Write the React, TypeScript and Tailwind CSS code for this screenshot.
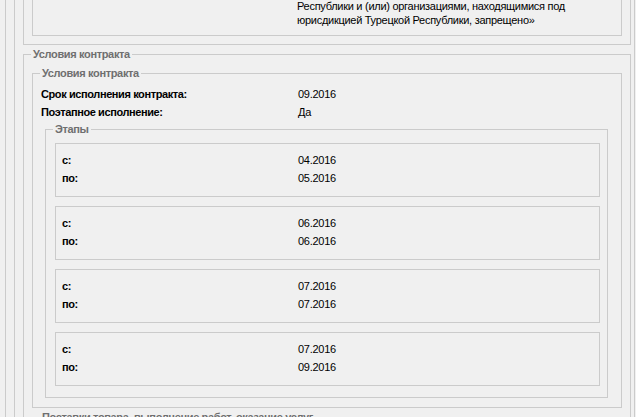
import type { ReactNode } from "react";

const stages = [
  { from: "04.2016", to: "05.2016" },
  { from: "06.2016", to: "06.2016" },
  { from: "07.2016", to: "07.2016" },
  { from: "07.2016", to: "09.2016" },
];

function Legend({ children }: { children: ReactNode }) {
  return (
    <legend className="ml-[7px] px-[2px] text-[11px] leading-[14px] font-bold tracking-[-0.35px] text-[#6f6f6f]">
      {children}
    </legend>
  );
}

function Stage({ from, to }: { from: string; to: string }) {
  return (
    <div className="ml-[9px] w-[545px] border border-[#cbcbcb] pt-[7px] pb-[9px] pl-[6px]">
      <div className="grid grid-cols-[236px_1fr] leading-[18px]">
        <span className="font-bold tracking-[-0.4px]">с:</span>
        <span>{from}</span>
        <span className="font-bold tracking-[-0.4px]">по:</span>
        <span>{to}</span>
      </div>
    </div>
  );
}

export default function App() {
  return (
    <div className="h-[417px] w-[636px] overflow-hidden bg-[#f0f0f0] font-['Liberation_Sans',Arial,sans-serif] text-[11px] tracking-[-0.28px] text-black">
      <div className="-mt-[15px] ml-[5px] w-[700px] border-l border-[#cbcbcb]">
        <div className="ml-[8px] w-[621px] border-x border-[#cbcbcb] pb-[40px]">
          {/* upper block, scrolled partly out of view */}
          <div className="ml-[8px] w-[608px] border border-[#cbcbcb] pt-[6px] pb-[8px]">
            <div className="ml-[8px] w-[590px] border border-[#cbcbcb] pt-[6px] pb-[8px] pl-[8px]">
              <div className="grid grid-cols-[256px_1fr] leading-[14px]">
                <span />
                <span>
                  Республики и (или) организациями, находящимися под
                  <br />
                  юрисдикцией Турецкой Республики, запрещено»
                </span>
              </div>
            </div>
          </div>

          <fieldset className="mt-[2px] ml-[8px] w-[608px] border border-[#cbcbcb]">
            <Legend>Условия контракта</Legend>
            <div className="pt-[5px]">
              <fieldset className="ml-[8px] w-[590px] border border-[#cbcbcb]">
                <Legend>Условия контракта</Legend>
                <div className="pt-[5px] pb-[9px]">
                  <div className="grid grid-cols-[257px_1fr] pl-[8px] leading-[18px]">
                    <span className="font-bold tracking-[-0.4px]">Срок исполнения контракта:</span>
                    <span>09.2016</span>
                    <span className="font-bold tracking-[-0.4px]">Поэтапное исполнение:</span>
                    <span>Да</span>
                  </div>
                  <fieldset className="mt-[1px] ml-[12px] w-[563px] border border-[#cbcbcb]">
                    <Legend>Этапы</Legend>
                    <div className="flex flex-col gap-[9px] pt-[7px] pb-[11px]">
                      {stages.map((s, i) => (
                        <Stage key={i} from={s.from} to={s.to} />
                      ))}
                    </div>
                  </fieldset>
                </div>
              </fieldset>

              <fieldset className="mt-[2px] ml-[8px] w-[590px] border border-[#cbcbcb]">
                <Legend>Поставки товара, выполнение работ, оказание услуг</Legend>
                <div className="h-[40px]" />
              </fieldset>
            </div>
          </fieldset>
        </div>
      </div>
    </div>
  );
}
